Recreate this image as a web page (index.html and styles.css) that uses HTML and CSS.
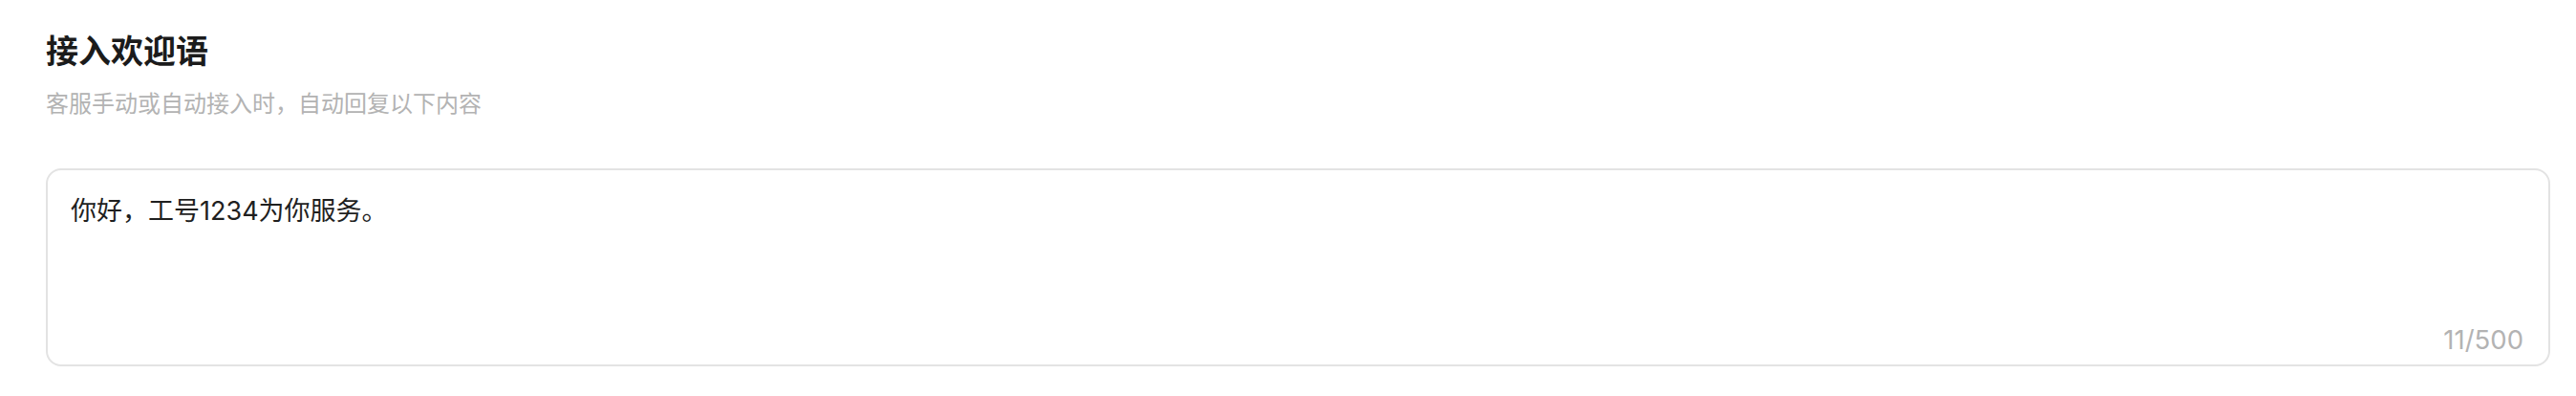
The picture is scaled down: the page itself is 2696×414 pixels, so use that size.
FILE: index.html
```html
<!DOCTYPE html>
<html lang="zh-CN">
<head>
<meta charset="utf-8">
<title>接入欢迎语</title>
<link rel="stylesheet" href="styles.css">
</head>
<body>
<section class="panel">
  <header class="panel-head">
    <h2 class="panel-title">接入欢迎语</h2>
    <p class="panel-desc">客服手动或自动接入时，自动回复以下内容</p>
  </header>
  <div class="textbox">
    <div class="textbox-content">你好，工号1234为你服务。</div>
    <div class="textbox-count">11/500</div>
  </div>
</section>
</body>
</html>
```

FILE: styles.css
```css
html, body {
  margin: 0;
  padding: 0;
  background: #ffffff;
}

body {
  font-family: Inter, "Noto Sans CJK SC", "Noto Sans", sans-serif;
}

.panel {
  padding: 31px 27px 0 48px;
}

.panel-head {
  display: flex;
  flex-direction: column;
  gap: 16px;
}

.panel-title {
  margin: 0;
  font-size: 34px;
  line-height: 46px;
  font-weight: 700;
  color: #1b1b1b;
}

.panel-desc {
  margin: 0;
  font-size: 24px;
  line-height: 32px;
  color: #b3b3b3;
}

.textbox {
  margin-top: 51px;
  height: 207px;
  box-sizing: border-box;
  border: 2px solid #e3e3e3;
  border-radius: 16px;
  padding: 24px 26px 8px 24px;
  display: flex;
  flex-direction: column;
  justify-content: space-between;
}

.textbox-content {
  font-size: 27px;
  line-height: 38px;
  color: #1f1f1f;
}

.textbox-count {
  align-self: flex-end;
  font-size: 27.5px;
  line-height: 36px;
  color: #b3b3b3;
}
```
